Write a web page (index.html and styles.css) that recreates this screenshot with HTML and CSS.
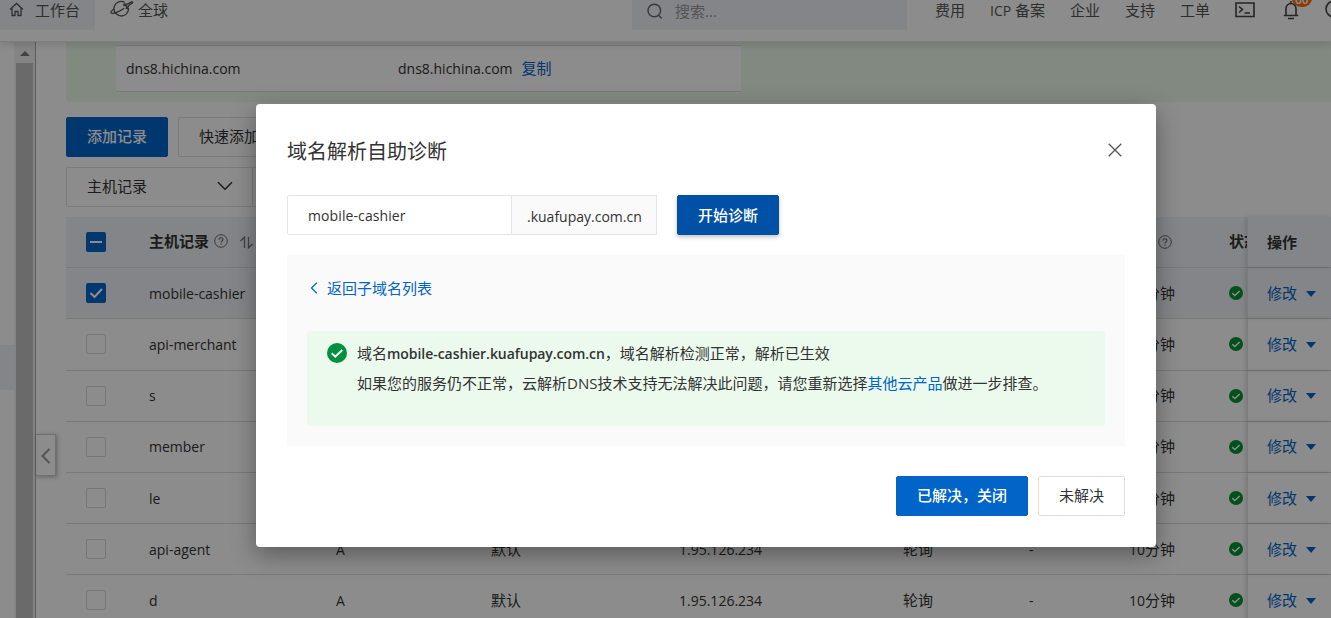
FILE: index.html
```html
<!DOCTYPE html>
<html lang="zh-CN">
<head>
    <meta charset="UTF-8">
    <meta name="viewport" content="width=device-width, initial-scale=1.0">
    <title>云解析DNS</title>
    <link rel="stylesheet" href="styles.css">
</head>
<body>
    <svg class="sprite" width="0" height="0">
        <symbol id="ok" viewBox="0 0 20 20">
            <circle cx="10" cy="10" r="10" fill="currentColor"/>
            <path d="M4.7 10.2l3.6 3.5 7-6.7" fill="none" stroke="#fff" stroke-width="2"/>
        </symbol>
        <symbol id="help" viewBox="0 0 14 14">
            <circle cx="7" cy="7" r="6.3" fill="none" stroke="#666"/>
            <path d="M5 5.7c0-2.6 4-2.5 4-.2C9 7 7 6.900 7 8.400M7 9.500v1.200" fill="none" stroke="#666" stroke-width="1.100"/>
        </symbol>
    </svg>

    <header class="topbar">
        <div class="workbench">
            <svg width="15" height="15" viewBox="0 0 15 15"><path d="M1 7.500L7.500 1.500 14 7.500M3 6.500V13.500H6V9.500H9V13.500H12V6.500" fill="none" stroke="#555" stroke-width="1.300"/></svg>
            <span>工作台</span>
        </div>
        <div class="region">
            <svg width="24" height="20" viewBox="0 0 24 20"><path d="M14.800 2.300A7.300 7.300 0 1 0 18.500 8M4.500 8.500C1.500 10.500 .3 12.300 1.300 13.100c1.600 1.200 8.500-1.400 12.800-4.800M14.200 3.800l3.300.3 4-2.200c1.400-.4 1.700.6.6 1.300l-3 2.100-1.800 3.200-1-.1.500-2.500-2.900-.5z" fill="none" stroke="#555" stroke-width="1.300"/></svg>
            <span>全球</span>
        </div>
        <div class="search">
            <svg width="16" height="17" viewBox="0 0 16 17"><circle cx="7.300" cy="7.500" r="6.300" fill="none" stroke="#666" stroke-width="1.400"/><path d="M11.500 12.200l3.300 3.300" stroke="#666" stroke-width="1.400"/></svg>
            <span>搜索...</span>
        </div>
        <nav class="links">
            <span>费用</span>
            <span><span class="en">ICP</span> 备案</span>
            <span>企业</span>
            <span>支持</span>
            <span>工单</span>
        </nav>
        <svg class="cli" width="20" height="16" viewBox="0 0 20 16"><path d="M1 1H19V14.500H1zM4 4.500l3.500 3L4 10.500M9.500 11H15" fill="none" stroke="#444" stroke-width="1.600"/></svg>
        <div class="bell">
            <svg width="16" height="20" viewBox="0 0 16 20"><path d="M.8 15.500H15.200M3 15V8.500a5 5 0 0 1 10 0V15M5 18.500h6M8 1v2" fill="none" stroke="#444" stroke-width="1.600"/></svg>
            <span class="badge">60</span>
        </div>
        <svg class="round" width="16" height="18" viewBox="0 0 16 18"><circle cx="9" cy="9" r="8" fill="none" stroke="#444" stroke-width="1.600"/></svg>
    </header>

    <div class="layout">
        <aside class="sidebar"><div class="current"></div></aside>
        <div class="scrollbar">
            <div class="up"></div>
            <div class="thumb"></div>
        </div>

        <main class="content">
            <button class="collapse"><svg width="10" height="16" viewBox="0 0 10 16"><path d="M8.500 1L1.500 8l7 7" fill="none" stroke="#999" stroke-width="2"/></svg></button>

            <div class="notice">
                <div class="dns">
                    <span class="dns-old en">dns8.hichina.com</span>
                    <span class="en">dns8.hichina.com</span>
                    <a>复制</a>
                </div>
            </div>

            <div class="actions">
                <button class="btn primary">添加记录</button>
                <button class="btn quick">快速添加</button>
            </div>

            <div class="filter">
                <div class="select">
                    <span>主机记录</span>
                    <svg width="16" height="10" viewBox="0 0 16 10"><path d="M1 1.200l7 7 7-7" fill="none" stroke="#333" stroke-width="1.500"/></svg>
                </div>
                <div class="keyword"></div>
            </div>

            <div class="records">
                <div class="row head">
                    <i class="check on"><svg width="20" height="20"><path d="M4 10h12" stroke="#fff" stroke-width="2"/></svg></i>
                    <b class="host">主机记录
                        <svg class="help" width="14" height="14"><use href="#help"/></svg>
                        <svg class="sort" width="13" height="13" viewBox="0 0 13 13"><path d="M.5 5L4.500 1.200V12M8.500 1V11.800L12.500 8" fill="none" stroke="#777" stroke-width="1.300"/></svg>
                    </b>
                    <span></span><span></span><span></span><span></span><span></span>
                    <span class="ttl-help"><svg width="14" height="14"><use href="#help"/></svg></span>
                    <b class="state">状态</b>
                    <b class="ops">操作</b>
                </div>
                <div class="row selected">
                    <i class="check on"><svg width="20" height="20"><path d="M4.500 10l4 4 7.500-8" fill="none" stroke="#fff" stroke-width="2.200"/></svg></i>
                    <span class="en">mobile-cashier</span>
                    <span></span><span></span><span></span><span></span><span></span>
                    <span><span class="en">10</span>分钟</span>
                    <span class="state"><svg width="14" height="14"><use href="#ok"/></svg></span>
                    <a class="ops">修改</a>
                </div>
                <div class="row">
                    <i class="check"></i>
                    <span class="en">api-merchant</span>
                    <span></span><span></span><span></span><span></span><span></span>
                    <span><span class="en">10</span>分钟</span>
                    <span class="state"><svg width="14" height="14"><use href="#ok"/></svg></span>
                    <a class="ops">修改</a>
                </div>
                <div class="row">
                    <i class="check"></i>
                    <span class="en">s</span>
                    <span></span><span></span><span></span><span></span><span></span>
                    <span><span class="en">10</span>分钟</span>
                    <span class="state"><svg width="14" height="14"><use href="#ok"/></svg></span>
                    <a class="ops">修改</a>
                </div>
                <div class="row">
                    <i class="check"></i>
                    <span class="en">member</span>
                    <span></span><span></span><span></span><span></span><span></span>
                    <span><span class="en">10</span>分钟</span>
                    <span class="state"><svg width="14" height="14"><use href="#ok"/></svg></span>
                    <a class="ops">修改</a>
                </div>
                <div class="row">
                    <i class="check"></i>
                    <span class="en">le</span>
                    <span></span><span></span><span></span><span></span><span></span>
                    <span><span class="en">10</span>分钟</span>
                    <span class="state"><svg width="14" height="14"><use href="#ok"/></svg></span>
                    <a class="ops">修改</a>
                </div>
                <div class="row">
                    <i class="check"></i>
                    <span class="en">api-agent</span>
                    <span class="en">A</span>
                    <span>默认</span>
                    <span class="en">1.95.126.234</span>
                    <span>轮询</span>
                    <span class="en">-</span>
                    <span><span class="en">10</span>分钟</span>
                    <span class="state"><svg width="14" height="14"><use href="#ok"/></svg></span>
                    <a class="ops">修改</a>
                </div>
                <div class="row">
                    <i class="check"></i>
                    <span class="en">d</span>
                    <span class="en">A</span>
                    <span>默认</span>
                    <span class="en">1.95.126.234</span>
                    <span>轮询</span>
                    <span class="en">-</span>
                    <span><span class="en">10</span>分钟</span>
                    <span class="state"><svg width="14" height="14"><use href="#ok"/></svg></span>
                    <a class="ops">修改</a>
                </div>
            </div>
        </main>
    </div>

    <!-- 诊断弹窗 -->
    <div class="overlay">
        <div class="modal">
            <div class="modal-head">
                <h2>域名解析自助诊断</h2>
                <svg width="14" height="14" viewBox="0 0 14 14"><path d="M.7.7l12.600 12.600M13.300.7L.7 13.300" stroke="#555" stroke-width="1.300"/></svg>
            </div>
            <div class="diagnose">
                <div class="prefix en">mobile-cashier</div>
                <div class="suffix en">.kuafupay.com.cn</div>
                <button class="btn start">开始诊断</button>
            </div>
            <div class="panel">
                <a class="back"><svg width="8" height="12" viewBox="0 0 8 12"><path d="M6.800.8L1.500 6l5.300 5.200" fill="none" stroke="#0064c8" stroke-width="1.200"/></svg>返回子域名列表</a>
                <div class="result">
                    <svg width="20" height="20"><use href="#ok"/></svg>
                    <div class="result-text">
                        <p>域名<b class="en">mobile-cashier.kuafupay.com.cn</b>，域名解析检测正常，解析已生效</p>
                        <p>如果您的服务仍不正常，云解析<span>DNS</span>技术支持无法解决此问题，请您重新选择<a>其他云产品</a>做进一步排查。</p>
                    </div>
                </div>
            </div>
            <div class="modal-foot">
                <button class="btn primary">已解决，关闭</button>
                <button class="btn">未解决</button>
            </div>
        </div>
    </div>
</body>
</html>
```

FILE: styles.css
```css
* {
    box-sizing: border-box;
}
body {
    margin: 0;
    height: 618px;
    overflow: hidden;
    position: relative;
    background: #fff;
    color: #333;
    font-family: "Open Sans", "Noto Sans CJK SC", sans-serif;
    font-size: 15px;
    line-height: 20px;
}
.en {
    font-size: 14px;
}
.sprite {
    position: absolute;
}
svg {
    flex: none;
}
a {
    color: #0064c8;
}
.btn {
    height: 40px;
    padding: 0 20px 2px;
    border: 1px solid #e0e0e0;
    border-radius: 2px;
    background: #fff;
    color: #333;
    font: inherit;
    white-space: nowrap;
}
.btn.primary {
    background: #0064c8;
    border-color: #0064c8;
    color: #fff;
    font-weight: 500;
}

/* topbar */
.topbar {
    position: relative;
    z-index: 2;
    display: flex;
    align-items: flex-start;
    height: 42px;
    background: #fff;
    border-bottom: 1px solid #e6e6e6;
    box-shadow: 0 2px 8px rgba(0, 0, 0, 0.15);
    white-space: nowrap;
    color: #555;
}
.topbar > * {
    flex: none;
}
.workbench {
    display: flex;
    gap: 11px;
    width: 95px;
    height: 30px;
    padding: 0 0 0 9px;
    background: #eff3f8;
}
.workbench svg {
    margin-top: 2px;
}
.region {
    display: flex;
    gap: 4px;
    width: 537px;
    padding-left: 15px;
}
.search {
    display: flex;
    gap: 12px;
    width: 275px;
    height: 30px;
    padding-left: 15px;
    background: #eff3f8;
    color: #999;
}
.search svg {
    margin-top: 3px;
}
.search span {
    padding-top: 1px;
}
.links {
    display: flex;
    gap: 25px;
    width: 328px;
    padding-left: 28px;
}
.cli {
    margin-top: 2px;
}
.bell {
    position: relative;
    margin-left: 28px;
}
.badge {
    position: absolute;
    left: 9px;
    top: -11px;
    height: 18px;
    padding: 0 3px;
    border-radius: 9px;
    background: #ff6a00;
    color: #fff;
    font-size: 12px;
    font-weight: 600;
    line-height: 21px;
}
.round {
    margin-left: 26px;
}

/* layout */
.layout {
    display: flex;
    height: 576px;
}
.sidebar {
    width: 14px;
    padding-top: 303px;
}
.current {
    height: 45px;
    background: #eff3f8;
}
.scrollbar {
    width: 22px;
    padding: 9px 2px 0;
    background: #f1f1f1;
    border-right: 1px solid #aaa;
}
.up {
    width: 0;
    margin: 0 auto 7px;
    border: 5px solid transparent;
    border-top: 0;
    border-bottom-color: #777;
}
.thumb {
    width: 17px;
    height: 560px;
    background: #c1c1c1;
}
.content {
    position: relative;
    flex: 1;
    padding-left: 30px;
}
.collapse {
    position: absolute;
    left: 0;
    top: 392px;
    width: 20px;
    height: 42px;
    padding: 4px 0 0;
    border: 1px solid #ccc;
    border-left: 0;
    background: #fff;
    box-shadow: 1px 1px 4px rgba(0, 0, 0, 0.3);
}
.notice {
    height: 60px;
    padding-left: 50px;
    background: #ebfaec;
    border-radius: 0 0 0 4px;
}
.dns {
    display: flex;
    align-items: center;
    width: 625px;
    height: 50px;
    padding: 0 10px;
    background: #fff;
    border-top: 3px solid #f8f8f8;
    border-bottom: 1px solid #dadde0;
    box-shadow: inset 0 1px #dadde0;
}
.dns .en {
    padding-top: 2px;
}
.dns-old {
    width: 272px;
}
.dns a {
    margin-left: 9px;
}
.actions {
    display: flex;
    gap: 10px;
    padding-top: 15px;
}
.filter {
    display: flex;
    height: 40px;
    margin-top: 10px;
}
.select {
    display: flex;
    align-items: center;
    justify-content: space-between;
    width: 187px;
    padding: 0 19px 2px 20px;
    border: 1px solid #e0e0e0;
    border-radius: 2px 0 0 2px;
}
.keyword {
    width: 200px;
    border: 1px solid #e0e0e0;
    border-left: 0;
}

/* records */
.records {
    margin-top: 10px;
}
.row {
    display: grid;
    grid-template-columns: 63px 187px 155px 188px 224px 126px 100px 100px 19px 83px;
    align-items: center;
    height: 51.200px;
    padding-left: 20px;
    border-bottom: 1px solid #dcdcdc;
    white-space: nowrap;
}
.row > .en {
    padding-top: 1px;
}
.row.head,
.row.selected {
    background: #eff3f8;
}
.check {
    width: 20px;
    height: 20px;
    border: 1px solid #d9d9d9;
    border-radius: 2px;
}
.check.on {
    border: 0;
    background: #0064c8;
}
.check svg {
    display: block;
}
.host {
    display: flex;
    align-items: center;
    padding-bottom: 2px;
}
.help {
    margin-left: 5px;
}
.sort {
    margin: 2px 0 0 12px;
}
.ttl-help {
    padding: 0 0 0 29px;
}
.ttl-help svg {
    display: block;
}
.state {
    overflow: hidden;
    color: #009432;
}
.head .state {
    padding-bottom: 2px;
    color: #333;
}
.state svg {
    display: block;
}
.ops {
    display: flex;
    align-items: center;
    align-self: stretch;
    margin-left: -1px;
    padding: 0 0 1px 19px;
    border-left: 1px solid #e2e2e2;
    box-shadow: -2px 0 4px rgba(0, 0, 0, 0.12);
}
a.ops::after {
    content: "";
    margin: 2px 0 0 9px;
    border: 5px solid transparent;
    border-top: 6px solid #0064c8;
    border-bottom: 0;
}

/* modal */
.overlay {
    position: absolute;
    inset: 0;
    z-index: 10;
    padding: 104px 0 0 256px;
    background: rgba(0, 0, 0, 0.45);
}
.modal {
    width: 900px;
    height: 443px;
    padding: 31px;
    border-radius: 4px;
    background: #fff;
    box-shadow: 0 8px 24px rgba(0, 0, 0, 0.35);
}
.modal-head {
    display: flex;
    align-items: center;
    justify-content: space-between;
    height: 30px;
    padding-right: 3px;
}
.modal-head h2 {
    margin: 3px 0 0;
    font-size: 20px;
    font-weight: 400;
}
.diagnose {
    display: flex;
    height: 40px;
    margin-top: 30px;
    line-height: 38px;
}
.prefix {
    width: 225px;
    padding: 1px 0 0 20px;
    border: 1px solid #e3e4e6;
    border-radius: 2px 0 0 2px;
    letter-spacing: 0.1px;
}
.suffix {
    width: 145px;
    padding: 2px 0 0 15px;
    border: 1px solid #e3e4e6;
    border-left: 0;
    background: #fafafa;
}
.btn.start {
    margin-left: 20px;
    padding-bottom: 1px;
    border-color: #0050a5;
    background: #0050a5;
    color: #fff;
    font-weight: 500;
    box-shadow: 0 2px 4px rgba(0, 0, 0, 0.25);
}
.panel {
    height: 191px;
    margin-top: 20px;
    padding: 23px 20px 20px;
    background: #fafafa;
}
.back {
    display: flex;
    align-items: center;
    gap: 9px;
    padding-left: 3px;
}
.result {
    display: flex;
    gap: 10px;
    height: 95px;
    margin-top: 33px;
    padding: 12px 20px 0;
    border-radius: 4px;
    background: #ebfaec;
    color: #00913f;
}
.result-text {
    margin-top: -5px;
    color: #333;
    line-height: 30px;
    white-space: nowrap;
}
.result-text p {
    margin: 0;
}
.result-text p + p {
    margin-top: -1px;
}
.result-text b {
    font-weight: 600;
    letter-spacing: -0.05px;
}
.modal-foot {
    display: flex;
    justify-content: flex-end;
    gap: 10px;
    margin-top: 30px;
}
```
